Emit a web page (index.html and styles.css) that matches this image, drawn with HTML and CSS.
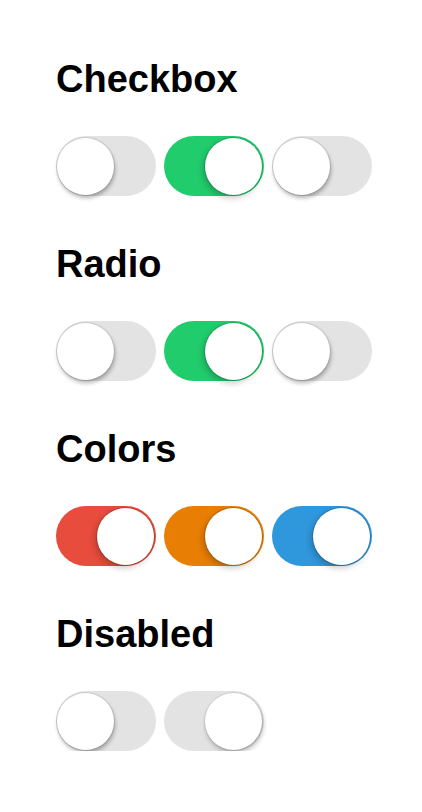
FILE: index.html
```html
<!DOCTYPE html>
<html lang="en">
<head>
<meta charset="utf-8">
<title>Switches</title>
<link rel="stylesheet" href="styles.css">
</head>
<body>
<main class="page">
  <section class="group">
    <h2 class="title">Checkbox</h2>
    <div class="row">
      <label class="switch"><input type="checkbox" class="input"><span class="knob"></span></label>
      <label class="switch switch--on switch--green"><input type="checkbox" class="input" checked><span class="knob"></span></label>
      <label class="switch"><input type="checkbox" class="input"><span class="knob"></span></label>
    </div>
  </section>
  <section class="group">
    <h2 class="title">Radio</h2>
    <div class="row">
      <label class="switch"><input type="radio" name="r" class="input"><span class="knob"></span></label>
      <label class="switch switch--on switch--green"><input type="radio" name="r" class="input" checked><span class="knob"></span></label>
      <label class="switch"><input type="radio" name="r" class="input"><span class="knob"></span></label>
    </div>
  </section>
  <section class="group">
    <h2 class="title">Colors</h2>
    <div class="row">
      <label class="switch switch--on switch--red"><input type="checkbox" class="input" checked><span class="knob"></span></label>
      <label class="switch switch--on switch--orange"><input type="checkbox" class="input" checked><span class="knob"></span></label>
      <label class="switch switch--on switch--blue"><input type="checkbox" class="input" checked><span class="knob"></span></label>
    </div>
  </section>
  <section class="group">
    <h2 class="title">Disabled</h2>
    <div class="row">
      <label class="switch switch--disabled"><input type="checkbox" class="input" disabled><span class="knob"></span></label>
      <label class="switch switch--on switch--disabled"><input type="checkbox" class="input" checked disabled><span class="knob"></span></label>
    </div>
  </section>
</main>
</body>
</html>
```
FILE: styles.css
```css
html, body {
  margin: 0;
  padding: 0;
  background: #ffffff;
}

.page {
  font-family: "Liberation Sans", Arial, sans-serif;
  padding: 57px 0 0 56px;
  display: flex;
  flex-direction: column;
  gap: 46px;
}

.group {
  display: flex;
  flex-direction: column;
  gap: 35px;
}

.title {
  margin: 0;
  font-size: 38px;
  line-height: 44px;
  font-weight: 700;
  color: #000;
}

.row {
  display: flex;
  gap: 8px;
}

.switch {
  position: relative;
  width: 100px;
  height: 60px;
  box-sizing: border-box;
  border-radius: 30px;
  background: #e3e3e3;
  display: flex;
  align-items: center;
  justify-content: flex-start;
  padding: 0 1px;
  cursor: pointer;
}

.input {
  position: absolute;
  opacity: 0;
  width: 0;
  height: 0;
  margin: 0;
}

.knob {
  width: 57px;
  height: 57px;
  border-radius: 50%;
  background: #fff;
  box-shadow: 0 0 0 1px rgba(0, 0, 0, 0.09), 1px 3px 4px rgba(0, 0, 0, 0.3);
}

.switch--on {
  justify-content: flex-end;
  padding: 0 2px 0 0;
}

.switch--on .knob {
  box-shadow: 0 0 0 1px rgba(0, 0, 0, 0.14), -2px 3px 6px rgba(0, 0, 0, 0.22);
}

.switch--green { background: #21cc6d; }
.switch--red { background: #e74c3c; }
.switch--orange { background: #e87e04; }
.switch--blue { background: #2f97dc; }

.switch--disabled {
  background: #e3e3e3;
  cursor: default;
}

.switch--disabled.switch--on .knob {
  box-shadow: 0 0 0 1px rgba(0, 0, 0, 0.07), 1px 3px 5px rgba(0, 0, 0, 0.28);
}
```
